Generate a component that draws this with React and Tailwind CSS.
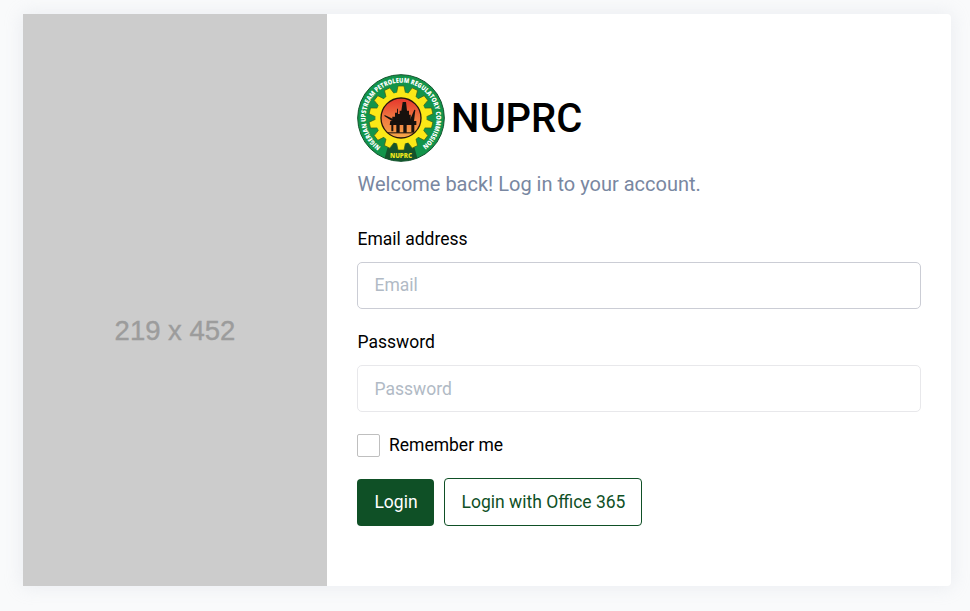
const GEAR_TEETH = Array.from({ length: 14 }, (_, i) => (i * 360) / 14);

function Logo() {
  return (
    <svg viewBox="0 0 264 264" className="block h-[88px] w-[88px] shrink-0" role="img" aria-label="NUPRC logo">
      <defs>
        <path id="ring" d="M 71.2 218.8 A 106 106 0 1 1 192.8 218.8" />
        <linearGradient id="sky" x1="0" y1="0" x2="0" y2="1">
          <stop offset="0" stopColor="#e5352d" />
          <stop offset="0.5" stopColor="#f07840" />
          <stop offset="1" stopColor="#f6a94a" />
        </linearGradient>
      </defs>
      <circle cx="132" cy="132" r="130" fill="#12944a" stroke="#14532d" strokeWidth="3" />
      <path d="M96 205 L168 205 L181 252 A130 130 0 0 1 83 252 Z" fill="#14532b" />
      <g fill="#fbe817" stroke="#3d5a17" strokeWidth="2">
        {GEAR_TEETH.map((a) => (
          <path key={a} d="M118 60 L123 36 L141 36 L146 60 Z" transform={`rotate(${a} 132 132)`} />
        ))}
      </g>
      <circle cx="132" cy="132" r="77" fill="#fbe817" />
      <circle cx="132" cy="132" r="60" fill="url(#sky)" stroke="#26160c" strokeWidth="4" />
      <g fill="#17110d">
        <path d="M100 141 H178 V153 H172 V174 H163 V153 H149 V176 H139 V153 H128 V176 H118 V153 H109 V172 H103 V153 H98 Z" />
        <path d="M106 142 V128 H114 V116 H120 V104 H123 V120 H128 V110 H133 L137 84 H147 L150 110 H156 V122 H161 V142 Z" />
        <path d="M157 142 L172 107 L175 108 L171 142 Z M106 142 L82 126 L83 123 L110 136 Z" />
        <path d="M92 175 H172 V178 H92 Z" />
      </g>
      <text
        fill="#fff"
        fontSize="20"
        fontWeight="800"
        fontFamily="'Open Sans', 'DejaVu Sans', sans-serif"
      >
        <textPath href="#ring" textLength="532" lengthAdjust="spacingAndGlyphs">
          NIGERIAN UPSTREAM PETROLEUM REGULATORY COMMISSION
        </textPath>
      </text>
      <text
        x="132"
        y="252"
        textAnchor="middle"
        fill="#e9e51c"
        fontSize="19"
        fontWeight="800"
        textLength="66"
        lengthAdjust="spacingAndGlyphs"
        fontFamily="'Open Sans', 'DejaVu Sans', sans-serif"
      >
        NUPRC
      </text>
    </svg>
  );
}

function Field({ label, type, placeholder, border, inset, className }) {
  return (
    <label className={`block ${className}`}>
      <span className="block h-[24px] pl-[0.5px] leading-[24px]">{label}</span>
      <input
        type={type}
        placeholder={placeholder}
        className={`mt-[11px] block h-[47px] w-full rounded-[5px] border bg-white px-[16.5px] outline-none placeholder:text-[#b1bac5] ${inset} ${border}`}
      />
    </label>
  );
}

export default function App() {
  return (
    <div className="h-[611px] w-full overflow-hidden bg-[#f9fafb] pt-[14px] pr-[19px] pl-[23px] font-[Roboto,sans-serif] text-[17.5px] text-black">
      <main className="flex h-[572px] rounded-[4px] bg-white shadow-[0_0_18px_2px_rgba(183,192,206,0.2)]">
        <div className="flex w-[304px] items-center justify-center bg-[#cccccc] pt-[62px]">
          <span className="font-['Liberation_Sans',Arial,sans-serif] text-[27.5px] leading-none text-[#9c9c9c] [-webkit-text-stroke:0.4px_#9c9c9c]">219 x 452</span>
        </div>
        <form className="flex-1 px-[30px] pt-[60px]">
          <h1 className="flex items-center gap-[6px]">
            <Logo />
            <span className="pt-[2px] text-[40px] leading-[48px] font-medium">NUPRC</span>
          </h1>
          <p className="mt-[8px] pl-[0.5px] text-[20px] leading-[28px] text-[#7987a1]">Welcome back! Log in to your account.</p>
          <Field label="Email address" type="email" placeholder="Email" border="border-[#cbcdd5]" inset="pb-[2px]" className="mt-[29px]" />
          <Field label="Password" type="password" placeholder="Password" border="border-[#e8e8eb]" inset="pb-0" className="mt-[21px]" />
          <label className="mt-[22px] flex items-center gap-[9px]">
            <input type="checkbox" className="h-[23px] w-[23px] appearance-none rounded-[2px] border border-[#bfbfbf] bg-white" />
            <span className="leading-[23px]">Remember me</span>
          </label>
          <div className="mt-[21px] flex items-end gap-[10px]">
            <button type="button" className="h-[47px] w-[77px] rounded-[4px] bg-[#0f5026] pb-[1px] pl-[1px] text-white">
              Login
            </button>
            <button type="button" className="h-[48px] w-[198px] rounded-[4px] border border-[#0f5026] pl-[1px] text-[#0f5026]">
              Login with Office 365
            </button>
          </div>
        </form>
      </main>
    </div>
  );
}
